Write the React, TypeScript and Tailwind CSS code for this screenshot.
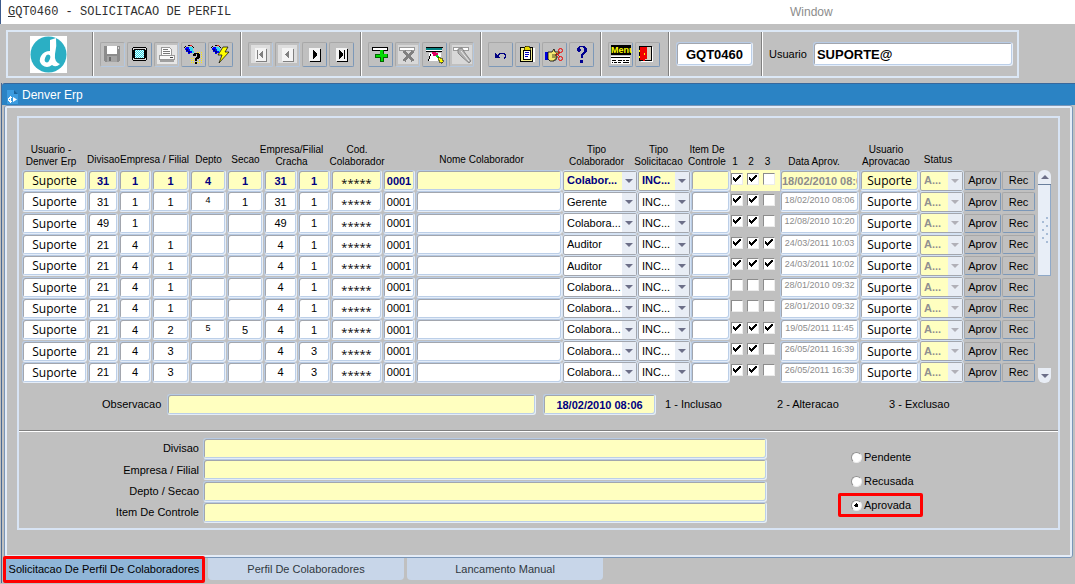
import type { ReactNode } from 'react'
import clsx from 'clsx'

const BEVEL =
  'rounded-[3px] border border-t-[#b8cbe4] border-l-[#b8cbe4] border-b-[#e4edf9] border-r-[#e4edf9] shadow-[inset_1px_1px_0_#a2a6ae,inset_-1px_-1px_0_#bccfe8]'
const BUTTON_BEVEL =
  'rounded-[2px] border border-t-[#a8a8a8] border-l-[#a8a8a8] border-b-[#7c98b8] border-r-[#7c98b8] bg-[#c0c0c0]'

type Row = {
  divisao: string
  empresa: string
  filial: string
  depto: string
  secao: string
  empCracha: string
  filCracha: string
  tipo: string
  checks: boolean[]
  data: string
}

const ROWS: Row[] = [
  { divisao: '31', empresa: '1', filial: '1', depto: '4', secao: '1', empCracha: '31', filCracha: '1', tipo: 'Colabor...', checks: [true, true, false], data: '18/02/2010 08:06' },
  { divisao: '31', empresa: '1', filial: '1', depto: '4', secao: '1', empCracha: '31', filCracha: '1', tipo: 'Gerente', checks: [true, true, false], data: '18/02/2010 08:06' },
  { divisao: '49', empresa: '1', filial: '', depto: '', secao: '', empCracha: '49', filCracha: '1', tipo: 'Colabora...', checks: [true, true, false], data: '12/08/2010 10:20' },
  { divisao: '21', empresa: '4', filial: '1', depto: '', secao: '', empCracha: '4', filCracha: '1', tipo: 'Auditor', checks: [true, true, true], data: '24/03/2011 10:03' },
  { divisao: '21', empresa: '4', filial: '1', depto: '', secao: '', empCracha: '4', filCracha: '1', tipo: 'Auditor', checks: [true, true, true], data: '24/03/2011 10:02' },
  { divisao: '21', empresa: '4', filial: '1', depto: '', secao: '', empCracha: '4', filCracha: '1', tipo: 'Colabora...', checks: [false, false, false], data: '28/01/2010 09:32' },
  { divisao: '21', empresa: '4', filial: '1', depto: '', secao: '', empCracha: '4', filCracha: '1', tipo: 'Colabora...', checks: [false, false, false], data: '28/01/2010 09:32' },
  { divisao: '21', empresa: '4', filial: '2', depto: '5', secao: '5', empCracha: '4', filCracha: '1', tipo: 'Colabora...', checks: [true, true, true], data: '19/05/2011 11:45' },
  { divisao: '21', empresa: '4', filial: '3', depto: '', secao: '', empCracha: '4', filCracha: '3', tipo: 'Colabora...', checks: [true, true, false], data: '26/05/2011 16:39' },
  { divisao: '21', empresa: '4', filial: '3', depto: '', secao: '', empCracha: '4', filCracha: '3', tipo: 'Colabora...', checks: [true, true, false], data: '26/05/2011 16:39' }
]

function Icon({ children }: { children: ReactNode }) {
  return (
    <svg viewBox="1 1 24 24" className="block h-6 w-6" shapeRendering="crispEdges" aria-hidden="true">
      {children}
    </svg>
  )
}

function Torch() {
  return (
    <>
      <path d="M5 5h3v1h2v2h1v3h-2v1h-2v-2h-2v-2h-1v-2h1z" fill="#00f" />
      <path d="M8 5h3v1h1v3h1v2h-2v-2h-2v-2h-1z" fill="#30d8f0" />
      <path d="M5 7h2v2h-2zM7 9h2v2h-2z" fill="#000080" />
      <path d="M4 4h1v1h-1zM7 3h2v1h-2zM11 4h1v1h-1zM12 5h1v1h-1zM3 5h1v1h-1z" fill="#000" />
      <path d="M9 3h2v1h-2z" fill="#e02020" />
    </>
  )
}

function NavPage({ children, disabled }: { children: ReactNode; disabled?: boolean }) {
  return (
    <Icon>
      {disabled && <path d="M3 3h19v18h-19z" fill="#dedede" />}
      <path d="M8 7h11v13h-11z" fill={disabled ? '#808080' : '#000'} />
      <path d="M7 6h11v13h-11z" fill="#f4f4f4" />
      <g fill={disabled ? '#808080' : '#000'}>{children}</g>
    </Icon>
  )
}

const icons = {
  save: (
    <Icon>
      <path d="M4 4h16v15h-1v1h-14v-1h-1z" fill="#8c8c8c" />
      <path d="M7 4h10v8h-10z" fill="#fff" />
      <path d="M7 14h10v6h-10z" fill="#a4a4a4" />
      <path d="M9 15h2v4h-2z" fill="#6c6c6c" />
      <path d="M18 5h1v2h-1z" fill="#ddd" />
    </Icon>
  ),
  screen: (
    <Icon>
      <path d="M6 5h13v1h1v12h-1v1h-13v-1h-1v-12h1z" fill="#000" />
      <path d="M6 6h13v12h-13z" fill="#d8d8d8" />
      <path d="M7 7h11v1h1v8h-1v1h-11v-1h-1v-8h1z" fill="#000" />
      <path d="M8 8h9v8h-9z" fill="#e8ffff" />
      <path d="M8 8.500h9M8 10.500h9M8 12.500h9M8 14.500h9" stroke="#30d0e0" strokeDasharray="1 1" />
      <path d="M9 9.500h8M9 11.500h8M9 13.500h8M9 15.500h8" stroke="#30d0e0" strokeDasharray="1 1" />
    </Icon>
  ),
  print: (
    <Icon>
      <path d="M3 3h20v19h-20z" fill="#e6e6e6" />
      <path d="M7.500 5.500h8l2 2v6h-10z" fill="#fff" stroke="#999" />
      <path d="M9 7.500h5M9 9.500h7M9 11.500h7" stroke="#777" />
      <path d="M5.500 13.500h15v4h-15z" fill="#fafafa" stroke="#999" />
      <path d="M6 18h14v2h-14z" fill="#a0a0a0" />
      <path d="M16 15h3v1h-3z" fill="#444" />
    </Icon>
  ),
  queryHelp: (
    <Icon>
      <Torch />
      <path d="M16 10h1v1h-1zM18 10h1v1h-1zM20 10h1v1h-1zM20 12h1v1h-1zM20 14h1v1h-1zM20 16h1v1h-1zM20 18h1v1h-1zM20 20h1v1h-1zM18 18h1v1h-1zM18 20h1v1h-1zM16 20h1v1h-1zM12 16h1v1h-1zM12 18h1v1h-1zM12 20h1v1h-1zM10 16h1v1h-1zM10 18h1v1h-1zM10 20h1v1h-1z" fill="#ffee00" />
      <path d="M13 11h5v1h1v4h-1v1h-2v2h-2v-3h1v-1h1v-3h-1v2h-3v-2h1zM14 20h2v2h-2z" fill="#000" />
    </Icon>
  ),
  queryRun: (
    <Icon>
      <Torch />
      <path d="M15 5h5l-3 5h4l-10 11 3-8h-4z" fill="#ffff00" stroke="#000" strokeWidth="0.7" shapeRendering="auto" />
    </Icon>
  ),
  first: (
    <NavPage disabled>
      <path d="M9 8h1v9h-1zM15 8v9l-4-4v-1z" />
    </NavPage>
  ),
  prev: (
    <NavPage disabled>
      <path d="M14 8v9l-4-4v-1z" />
    </NavPage>
  ),
  next: (
    <NavPage>
      <path d="M11 8v9l4-4v-1z" />
    </NavPage>
  ),
  last: (
    <NavPage>
      <path d="M10 8v9l4-4v-1zM15 8h1v9h-1z" />
    </NavPage>
  ),
  add: (
    <Icon>
      <path d="M4.500 5.500h15v3h-15z" fill="#fff" stroke="#000" />
      <path d="M12 8h4v4h4v4h-4v4h-4v-4h-5v-4h5z" fill="#006400" />
      <path d="M12 8h3v4h4v3h-4v4h-2v-4h-5v-2h4z" fill="#00dc00" />
    </Icon>
  ),
  remove: (
    <Icon>
      <path d="M3 3h20v19h-20z" fill="#d8d8d8" />
      <path d="M4.500 5.500h15v3h-15z" fill="#fff" stroke="#999" />
      <path d="M9 9l9 10M18 9l-9 10" stroke="#808080" strokeWidth="3" />
    </Icon>
  ),
  lockRecord: (
    <Icon>
      <path d="M4 5h17v1h-17z" fill="#000" />
      <path d="M4 6h16v2h-16z" fill="#008080" />
      <path d="M4 8h16v1h-16z" fill="#fff" />
      <path d="M4 9h16v1h-16z" fill="#000" />
      <path d="M7 11h12v8h-12z" fill="#fff" />
      <path d="M6 19l3-7" stroke="#000" fill="none" />
      <path d="M10 10h4v1h2v4h-2v-1h-3v-2h-1z" fill="#e00060" />
      <path d="M14 13h2v1h1v2h-2v-1h-1z" fill="#00d020" />
      <path d="M16 15h2v1h2v2h1v2h-1v1h-1v-1h-2v-2h-1z" fill="#ffff00" stroke="#000" strokeWidth="0.5" />
    </Icon>
  ),
  torch: (
    <Icon>
      <path d="M3 3h20v19h-20z" fill="#d8d8d8" />
      <path d="M4.500 5.500h15v3h-15z" fill="#fff" stroke="#999" />
      <g shapeRendering="auto">
        <path d="M9 7l4-1 3 5 6 8-2 2-7-6-4-4z" fill="#b0b0b0" stroke="#777" strokeWidth="0.8" />
        <path d="M12 9l8 10" stroke="#eee" />
      </g>
    </Icon>
  ),
  undo: (
    <Icon>
      <path d="M10.500 13.500v-1h1v-1h5v1h1v3h-1v1" fill="none" stroke="#000080" />
      <path d="M7 11h1v1h1v1h1v1h1v1h1v1h-5z" fill="#000080" />
    </Icon>
  ),
  clipboard: (
    <Icon>
      <path d="M7 6h13v14h-13z" fill="#fff" />
      <path d="M5.500 5.500h12v14h-12z" fill="#f4f090" stroke="#000" />
      <path d="M8.500 8.500h7v9h-7z" fill="#fff" stroke="#000" />
      <path d="M10 4h4v1h1v3h-6v-3h1z" fill="#e8d800" stroke="#000" strokeWidth="0.6" />
      <path d="M10 10.500h4M10 12.500h4M10 14.500h3" stroke="#0000c0" />
    </Icon>
  ),
  cut: (
    <Icon>
      <path d="M3 10h3v8h-3z" fill="#0000e0" />
      <g shapeRendering="auto">
        <path d="M6 10h4l2-3 1 3h4v2h-3v2h1v2h-1v2h-2v1h-4l-2-2z" fill="#f4e870" stroke="#000" strokeWidth="0.8" />
        <path d="M10 13h4M10 15h4" stroke="#000" strokeWidth="0.7" />
        <g fill="none" stroke="#f00000">
          <circle cx="18.500" cy="8.500" r="2" />
          <circle cx="18.500" cy="16.500" r="2" />
          <path d="M14 14l4-4M14 11l4 4" />
        </g>
      </g>
    </Icon>
  ),
  help: (
    <Icon>
      <path d="M9 5h1v-1h6v1h1v1h1v4h-1v1h-1v1h-1v1h-1v3h-2v-4h1v-1h1v-1h1v-4h-1v-1h-3v2h1v2h-1v1h-2v-1h-1v-3h1zM11 18h3v3h-3z" fill="#000090" />
    </Icon>
  ),
  menu: (
    <Icon>
      <path d="M3 3h20v10h-20z" fill="#000" />
      <text x="3" y="11" fontSize="9" fontWeight="bold" fill="#ffff00">
        Menu
      </text>
      <path d="M3 14h19v8h-19z" fill="#fff" />
      <path d="M3 15.500h19" stroke="#000" />
      <path d="M4 18.500h4M10 18.500h4M15 18.500h2M18 18.500h3M4 20.500h1M6 20.500h3M10 20.500h3M15 20.500h6" stroke="#000" />
    </Icon>
  ),
  exit: (
    <Icon>
      <path d="M4.500 4.500h12v14h-12z" fill="#d8d0c0" stroke="#000" />
      <path d="M17 5h1v15h-12v-1h11z" fill="#fff" />
      <path d="M5 5h7v12h-2v2h-2v-1h-3z" fill="#f00000" />
      <path d="M4 8h1v2h-1zM4 14h1v2h-1zM9 11h1v2h-1z" fill="#ffff00" />
    </Icon>
  )
}

function ToolGroup({ items, className }: { items: [string, ReactNode, boolean?][]; className?: string }) {
  return (
    <div className={clsx('flex items-center gap-[2px] border-r border-white shadow-[inset_-1px_0_0_#808080]', className)}>
      {items.map(([label, icon, disabled]) => (
        <button
          key={label}
          aria-label={label}
          className={clsx(
            'h-[25px] w-[25px] overflow-hidden rounded-[2px] border border-t-[#a8a8a8] border-l-[#a8a8a8]',
            disabled ? 'border-r-[#b4c8e0] border-b-[#b4c8e0]' : 'border-r-[#7c98b8] border-b-[#7c98b8]'
          )}
        >
          {icon}
        </button>
      ))}
    </div>
  )
}

function Toolbar() {
  return (
    <div className="mt-[6px] ml-[6px] flex h-[48px] w-[1013px] max-w-full border-2 border-[#dce8f6]">
      <div className="flex w-[86px] items-center border-r border-white pl-[22px] shadow-[inset_-1px_0_0_#808080]">
        <svg viewBox="0 0 37 37" className="h-[37px] w-[37px] bg-white" role="img" aria-label="Denver">
          <circle cx="18.500" cy="18.500" r="18" fill="#2bafc4" />
          <path d="M20 4 L26 2 Q27 10 25 18 Q24 26 30 28 Q26 32 22 29 Q17 33 12 29 Q8 25 11 20 Q14 15 20 15 Z" fill="#fff" />
          <ellipse cx="17.500" cy="22.500" rx="2.500" ry="4" transform="rotate(20 17.500 22.500)" fill="#2bafc4" />
        </svg>
      </div>
      <ToolGroup
        className="w-[148px] pl-[6px]"
        items={[
          ['Salvar', icons.save, true],
          ['Tela', icons.screen],
          ['Imprimir', icons.print, true],
          ['Entrar consulta', icons.queryHelp],
          ['Executar consulta', icons.queryRun]
        ]}
      />
      <ToolGroup
        className="w-[120px] pl-[6px]"
        items={[
          ['Primeiro', icons.first, true],
          ['Anterior', icons.prev, true],
          ['Proximo', icons.next],
          ['Ultimo', icons.last]
        ]}
      />
      <ToolGroup
        className="w-[120px] pl-[6px]"
        items={[
          ['Inserir', icons.add],
          ['Remover', icons.remove, true],
          ['Bloquear', icons.lockRecord],
          ['Limpar', icons.torch, true]
        ]}
      />
      <ToolGroup
        className="w-[120px] pl-[6px]"
        items={[
          ['Desfazer', icons.undo],
          ['Copiar', icons.clipboard],
          ['Recortar', icons.cut],
          ['Ajuda', icons.help]
        ]}
      />
      <ToolGroup
        className="w-[68px] pl-[6px]"
        items={[
          ['Menu', icons.menu],
          ['Sair', icons.exit]
        ]}
      />
      <div className="flex w-[93px] items-center border-r border-white pl-[6px] shadow-[inset_-1px_0_0_#808080]">
        <input
          aria-label="Programa"
          defaultValue="GQT0460"
          className={clsx(BEVEL, 'h-[24px] w-[77px] bg-white text-center text-[13px] font-bold')}
        />
      </div>
      <div className="flex flex-1 items-center gap-[6px] pr-1 pl-[6px]">
        <label htmlFor="usuario">Usuario</label>
        <input
          id="usuario"
          defaultValue="SUPORTE@"
          className={clsx(BEVEL, 'h-[24px] min-w-0 flex-1 bg-white px-[3px] text-[13px] font-bold')}
        />
      </div>
    </div>
  )
}

function CellInput({
  label,
  value,
  active,
  className
}: {
  label: string
  value: string
  active: boolean
  className?: string
}) {
  return (
    <input
      aria-label={label}
      defaultValue={value}
      className={clsx(
        BEVEL,
        'block h-[21px] w-full',
        active ? 'bg-[#ffffc0]' : 'bg-white',
        className ?? clsx('text-center text-[11px]', active && 'font-bold text-[#000080]')
      )}
    />
  )
}

function CellSelect({
  label,
  value,
  active,
  disabled
}: {
  label: string
  value: string
  active: boolean
  disabled?: boolean
}) {
  return (
    <div className="relative">
      <select
        aria-label={label}
        disabled={disabled}
        className={clsx(
          'block h-[20px] w-full appearance-none rounded-[2px] border border-[#a2a6ae] pl-[3px] text-[11px] opacity-100 outline outline-[#d4e2f3]',
          active || disabled ? 'bg-[#ffffc0] font-bold' : 'bg-white',
          disabled ? 'text-[#909090]' : active && 'text-[#000080]'
        )}
      >
        <option>{value}</option>
      </select>
      <span className="pointer-events-none absolute inset-y-px right-px flex w-[14px] items-center justify-center bg-[#e8edf5]">
        <svg viewBox="0 0 8 4" className={clsx('h-1 w-2', disabled ? 'fill-[#b0b0b8]' : 'fill-[#6c6f88]')}>
          <path d="M0 0h8l-4 4z" />
        </svg>
      </span>
    </div>
  )
}

function CellCheck({ label, checked }: { label: string; checked: boolean }) {
  return (
    <div className="relative mb-1 h-3 w-3">
      <input
        type="checkbox"
        aria-label={label}
        defaultChecked={checked}
        className="peer block h-3 w-3 appearance-none border border-t-[#8c8c8c] border-l-[#8c8c8c] border-r-[#ececec] border-b-[#ececec] bg-white"
      />
      <svg
        viewBox="0 0 12 12"
        className="pointer-events-none absolute inset-0 hidden h-3 w-3 peer-checked:block"
        shapeRendering="crispEdges"
      >
        <path d="M2 4h1v1h1v1h1v-1h1v-1h1v-1h1v-1h2v2h-1v1h-1v1h-1v1h-1v1h-1v1h-1v-1h-1v-1h-1z" />
      </svg>
    </div>
  )
}

function Th({ children, span, className }: { children?: ReactNode; span?: number; className?: string }) {
  return (
    <th
      colSpan={span}
      className={clsx('pt-0 align-bottom font-normal whitespace-nowrap', className ?? 'px-0 pb-[2px]')}
    >
      <div className="flex flex-col items-center">{children}</div>
    </th>
  )
}

function RequestTable() {
  const suporte = "text-center font-['Open_Sans',sans-serif] text-[12px]"
  return (
    <table className="h-[265px] w-full table-fixed border-separate border-spacing-0">
      <colgroup>
        <col className="w-[66px]" />
        <col className="w-[31px]" />
        <col className="w-[33px]" />
        <col className="w-[38px]" />
        <col className="w-[37px]" />
        <col className="w-[37px]" />
        <col className="w-[34px]" />
        <col className="w-[33px]" />
        <col className="w-[52px]" />
        <col className="w-[33px]" />
        <col />
        <col className="w-[75px]" />
        <col className="w-[53px]" />
        <col className="w-[40px]" />
        <col className="w-[16px]" />
        <col className="w-[16px]" />
        <col className="w-[17px]" />
        <col className="w-[80px]" />
        <col className="w-[60px]" />
        <col className="w-[44px]" />
        <col className="w-[38px]" />
        <col className="w-[34px]" />
      </colgroup>
      <thead>
        <tr className="h-[52px] text-[10px] leading-3">
          <Th className="pr-2 pb-[2px] pl-0"><span>Usuario -</span><span>Denver Erp</span></Th>
          <Th className="px-0 pb-1">Divisao</Th>
          <Th span={2} className="px-0 pb-1">Empresa / Filial</Th>
          <Th className="px-0 pb-1">Depto</Th>
          <Th className="px-0 pb-1">Secao</Th>
          <Th span={2} className="pr-3 pb-[2px] pl-0"><span>Empresa/Filial</span><span>Cracha</span></Th>
          <Th><span>Cod.</span><span>Colaborador</span></Th>
          <Th />
          <Th className="pr-4 pb-1 pl-0">Nome Colaborador</Th>
          <Th className="pr-2 pb-[2px] pl-0"><span>Tipo</span><span>Colaborador</span></Th>
          <Th className="pr-3 pb-[2px] pl-0"><span>Tipo</span><span>Solicitacao</span></Th>
          <Th className="pr-2 pb-[2px] pl-0"><span>Item De</span><span>Controle</span></Th>
          <Th className="pr-2 pb-[2px] pl-0">1</Th>
          <Th className="pr-2 pb-[2px] pl-0">2</Th>
          <Th className="pr-2 pb-[2px] pl-0">3</Th>
          <Th className="pr-3 pb-[2px] pl-0">Data Aprov.</Th>
          <Th className="pr-2 pb-[2px] pl-0"><span>Usuario</span><span>Aprovacao</span></Th>
          <Th className="pr-2 pb-1 pl-0">Status</Th>
          <Th />
          <Th />
        </tr>
      </thead>
      <tbody>
        {ROWS.map((r, i) => {
          const active = i === 0
          return (
            <tr key={i} className="*:p-0 *:pr-px">
              <td><CellInput label="Usuario" value="Suporte" active={active} className={suporte} /></td>
              <td><CellInput label="Divisao" value={r.divisao} active={active} /></td>
              <td><CellInput label="Empresa" value={r.empresa} active={active} /></td>
              <td><CellInput label="Filial" value={r.filial} active={active} /></td>
              <td>
                <CellInput
                  label="Depto"
                  value={r.depto}
                  active={active}
                  className={active ? undefined : 'pb-1 text-center text-[9px]'}
                />
              </td>
              <td><CellInput label="Secao" value={r.secao} active={active} /></td>
              <td><CellInput label="Empresa cracha" value={r.empCracha} active={active} /></td>
              <td><CellInput label="Filial cracha" value={r.filCracha} active={active} /></td>
              <td>
                <CellInput
                  label="Cod. colaborador"
                  value="*****"
                  active={active}
                  className="pt-1 text-center font-['Open_Sans',sans-serif] text-[11px]"
                />
              </td>
              <td><CellInput label="Digito" value="0001" active={active} /></td>
              <td><CellInput label="Nome colaborador" value="" active={active} /></td>
              <td><CellSelect label="Tipo colaborador" value={r.tipo} active={active} /></td>
              <td><CellSelect label="Tipo solicitacao" value="INC..." active={active} /></td>
              <td><CellInput label="Item de controle" value="" active={active} /></td>
              {r.checks.map((c, n) => (
                <td key={n} className={clsx(active && 'bg-[#ffffc0]')}>
                  <CellCheck label={`Opcao ${n + 1}`} checked={c} />
                </td>
              ))}
              <td>
                <CellInput
                  label="Data aprov."
                  value={r.data}
                  active={active}
                  className={
                    active
                      ? 'px-px text-[11px] font-bold text-[#8c8c8c]'
                      : 'pb-1 text-center text-[9px] text-[#8c8c8c]'
                  }
                />
              </td>
              <td><CellInput label="Usuario aprovacao" value="Suporte" active={active} className={suporte} /></td>
              <td><CellSelect label="Status" value="A..." active={active} disabled /></td>
              <td><button className={clsx(BUTTON_BEVEL, 'block h-[19px] w-full text-[11px]')}>Aprov</button></td>
              <td><button className={clsx(BUTTON_BEVEL, 'block h-[19px] w-full text-[11px]')}>Rec</button></td>
            </tr>
          )
        })}
      </tbody>
    </table>
  )
}

function ScrollBar() {
  return (
    <div className="mt-[52px] ml-[2px] flex w-[13px] shrink-0 flex-col justify-between">
      <div>
        <button
          aria-label="Subir"
          className="flex h-[15px] w-full items-center justify-center rounded-t-md border-b border-[#6a7f9c] bg-[#e8edf5]"
        >
          <svg viewBox="0 0 8 4" className="h-1 w-2 fill-[#6c6f88]"><path d="M0 4h8l-4-4z" /></svg>
        </button>
        <div className="flex h-[91px] items-center justify-center border-r border-b border-[#8fa9c8] bg-[#e8eef7]">
          <svg viewBox="0 0 9 26" className="h-[26px] w-[9px] fill-[#a8bcd6]">
            {[0, 8, 16].map((y) => (
              <path key={y} d={`M6 ${y}h2v2h-2zM2 ${y + 4}h2v2h-2zM6 ${y + 8}h2v2h-2z`} />
            ))}
          </svg>
        </div>
      </div>
      <button aria-label="Descer" className="flex h-[15px] w-full items-center justify-center rounded-b-md bg-[#e8edf5]">
        <svg viewBox="0 0 8 4" className="h-1 w-2 fill-[#6c6f88]"><path d="M0 0h8l-4 4z" /></svg>
      </button>
    </div>
  )
}

function Filters() {
  const fields = ['Divisao', 'Empresa / Filial', 'Depto / Secao', 'Item De Controle']
  const states = ['Pendente', 'Recusada', 'Aprovada']
  return (
    <div className="flex border-t border-white pt-[6px] pb-[5px] shadow-[0_-1px_0_#808080]">
      <div className="grid h-[85px] w-[748px] grid-cols-[180px_1fr] grid-rows-4 gap-x-1">
        {fields.map((f) => (
          <div key={f} className="contents">
            <label htmlFor={f} className="self-center text-right">{f}</label>
            <input id={f} className={clsx(BEVEL, 'h-[21px] min-w-0 bg-[#ffffc0] px-1')} />
          </div>
        ))}
      </div>
      <div className="ml-[71px] flex flex-col pt-[7px]">
        {states.map((s) => (
          <label
            key={s}
            className={clsx(
              'flex h-6 w-[85px] items-center gap-[2px] border-[3px] pl-[10px]',
              s === 'Aprovada' ? 'rounded-[2px] border-[#ff0000]' : 'border-transparent'
            )}
          >
            <input
              type="radio"
              name="situacao"
              defaultChecked={s === 'Aprovada'}
              className="h-[11px] w-[11px] shrink-0 appearance-none rounded-full border border-t-[#909090] border-l-[#909090] border-r-[#ececec] border-b-[#ececec] bg-white checked:bg-[radial-gradient(circle,#000_0_2px,#fff_2px)]"
            />
            {s}
          </label>
        ))}
      </div>
    </div>
  )
}

export default function App() {
  return (
    <div className="flex min-h-screen flex-col overflow-x-hidden bg-[#c0c0c0] font-['Liberation_Sans',Arial,sans-serif] text-[11px] text-black">
      <header className="grid h-6 grid-cols-[789px_1fr] items-center border-l border-[#3c5a8c] bg-white">
        <h1 className="pl-[7px] font-['Liberation_Mono',monospace] text-[12px] text-[#303030]">
          <span className="underline">G</span>QT0460 - SOLICITACAO DE PERFIL
        </h1>
        <span className="text-[12px] text-[#8c8c8c]">Window</span>
      </header>
      <Toolbar />
      <section className="mt-[5px] ml-px border-l border-[#4a6a94]">
        <div className="flex h-[22px] items-center gap-1 rounded-tl-[3px] border-t border-[#38689c] bg-[#2b83c4] pl-[5px] text-[12px] text-white">
          <svg viewBox="0 0 11 14" className="mt-1 h-[14px] w-[11px]">
            <path d="M0 0h7l4 4v10h-11z" fill="#3c9ce0" />
            <path d="M7 0v4h4z" fill="#1c649c" />
            <path d="M3 6h1v1h1v1h-1v3h1v1h-1v1h-1v-1h-1v-1h-1v-3h1v-1h1zM6 7v5l4-2.500z" fill="#fff" />
            <path d="M2 9h1v1h-1z" fill="#3c9ce0" />
          </svg>
          Denver Erp
        </div>
        <main className="mr-[2px] ml-[2px] rounded-[3px] border border-[#7a96b8]">
          <div className="rounded-[2px] border-2 border-[#e4ecf7] px-[10px] pt-2 pb-[25px]">
            <div className="border-2 border-[#d8e4f4]">
              <div className="flex pr-[7px] pl-[3px]">
                <div className="min-w-0 flex-1">
                  <RequestTable />
                </div>
                <ScrollBar />
              </div>
              <div className="mt-[11px] mb-4 flex items-center pl-[83px]">
                <label htmlFor="observacao" className="w-[60px]">Observacao</label>
                <input id="observacao" className={clsx(BEVEL, 'ml-[5px] h-[21px] w-[369px] bg-[#ffffc0] px-1')} />
                <input
                  aria-label="Data"
                  defaultValue="18/02/2010 08:06"
                  className={clsx(
                    BEVEL,
                    'ml-[7px] h-[21px] w-[113px] bg-[#ffffc0] text-center font-bold text-[#000080]'
                  )}
                />
                <span className="ml-[9px] w-[112px]">1 - Inclusao</span>
                <span className="w-[112px]">2 - Alteracao</span>
                <span>3 - Exclusao</span>
              </div>
              <Filters />
            </div>
          </div>
        </main>
        <nav className="flex gap-[3px] pl-px">
          <button className="-mt-[2px] h-[27px] w-[202px] rounded-[2px] border-[3px] border-[#ff0000] bg-[#90b6d8] whitespace-nowrap">
            Solicitacao De Perfil De Colaboradores
          </button>
          <button className="h-[22px] w-[196px] rounded-b-[4px] bg-[#c8d6e9] text-[#303840]">
            Perfil De Colaboradores
          </button>
          <button className="h-[22px] w-[196px] rounded-b-[4px] bg-[#c8d6e9] text-[#303840]">Lancamento Manual</button>
        </nav>
      </section>
    </div>
  )
}
